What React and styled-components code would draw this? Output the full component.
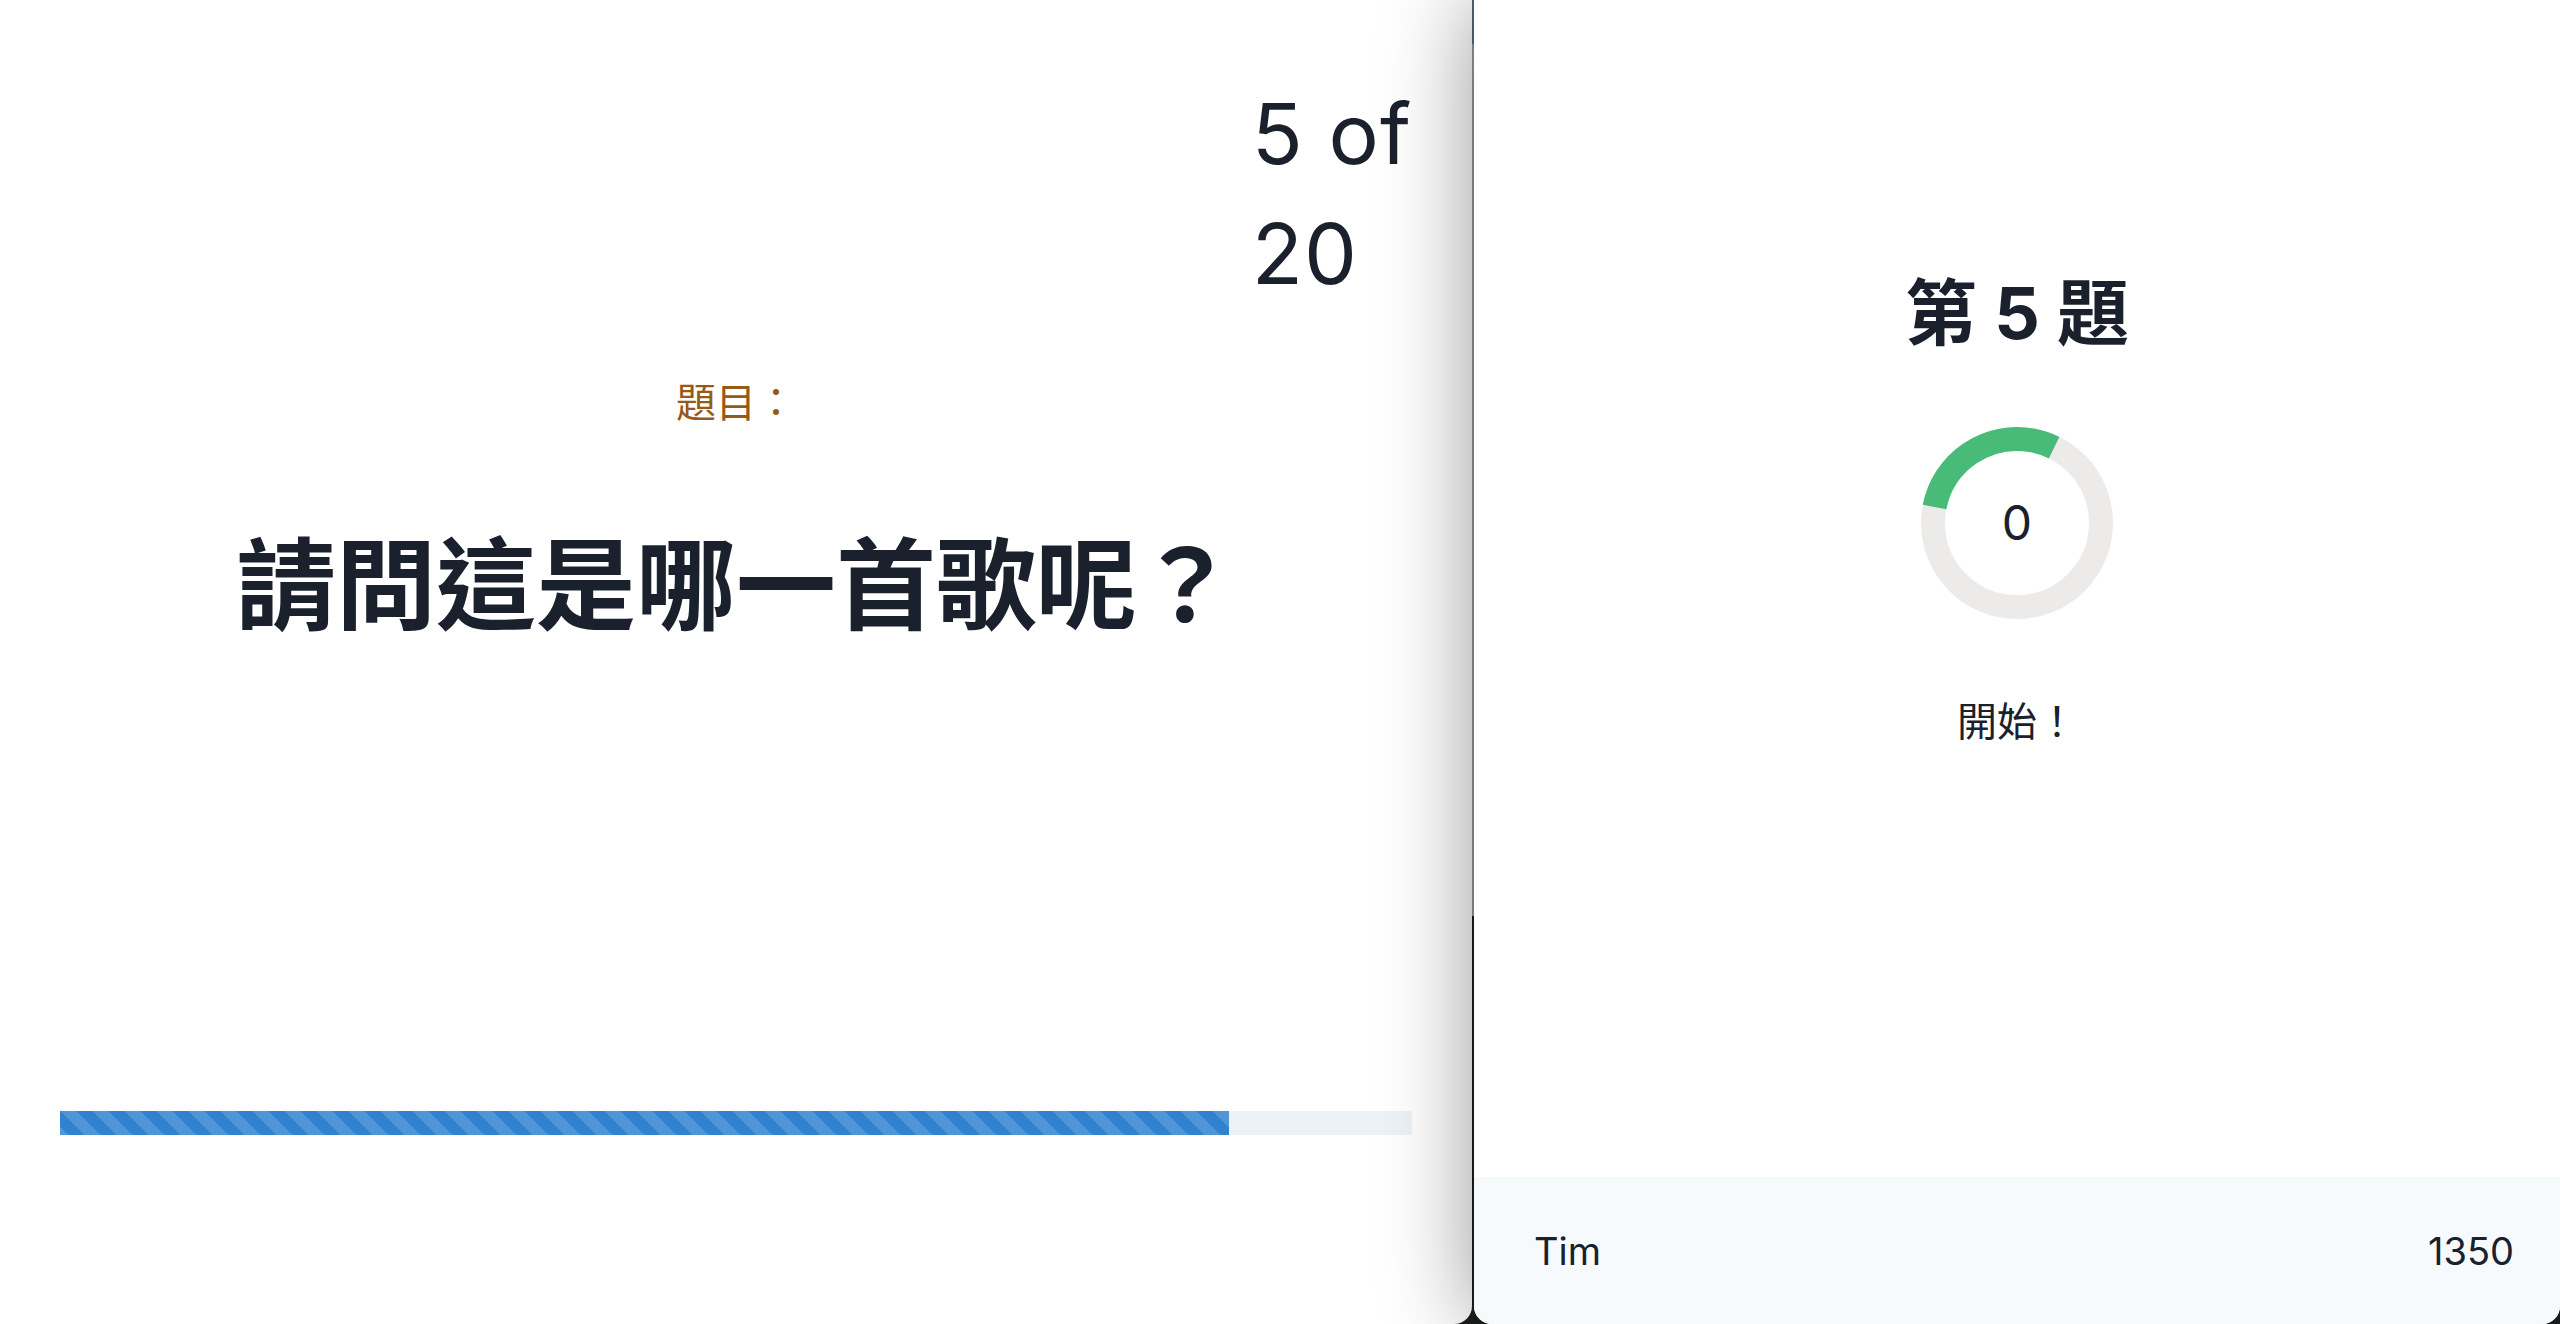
import React from 'react'
import styled, { createGlobalStyle } from 'styled-components'

const GlobalStyle = createGlobalStyle`
  *, *::before, *::after {
    box-sizing: border-box;
  }
  html, body {
    margin: 0;
    padding: 0;
    background: #ffffff;
  }
  body {
    font-family: Inter, "Noto Sans CJK TC", "Noto Sans", sans-serif;
    color: #1a202c;
  }
`

function Ring({ value, progress, rotate }) {
  const c = 2 * Math.PI * 42
  return (
    <RingBox>
      <svg viewBox="0 0 100 100" width="200" height="200">
        <circle cx="50" cy="50" r="42" fill="none" stroke="#edebe9" strokeWidth="12" />
        <circle
          cx="50"
          cy="50"
          r="42"
          fill="none"
          stroke="#48bb78"
          strokeWidth="12"
          strokeDasharray={`${c * progress} ${c}`}
          transform={`rotate(${rotate} 50 50)`}
        />
      </svg>
      <RingLabel>{value}</RingLabel>
    </RingBox>
  )
}

function App() {
  return (
    <>
      <GlobalStyle />
      <Desktop>
        <QuizWindow>
          <Counter>
            5 of
            <br />
            20
          </Counter>
          <Label>題目：</Label>
          <Question>請問這是哪一首歌呢？</Question>
          <Track>
            <Fill style={{ width: '86.5%' }} />
          </Track>
        </QuizWindow>
        <PlayerWindow>
          <Title>第 5 題</Title>
          <Ring value={0} progress={0.292} rotate={191} />
          <Status>開始！</Status>
          <Footer>
            <span>Tim</span>
            <span>1350</span>
          </Footer>
        </PlayerWindow>
      </Desktop>
    </>
  )
}

export default App

const Desktop = styled.div`
  width: 2560px;
  height: 1324px;
  display: flex;
  gap: 2px;
  overflow: hidden;
  background: linear-gradient(
    to bottom,
    #4b6b7e 0,
    #4b6b7e 44px,
    #9a9a9a 44px,
    #9a9a9a 916px,
    #1e1e1e 916px
  );
`

const QuizWindow = styled.div`
  width: 1472px;
  flex-shrink: 0;
  background: #ffffff;
  padding: 74px 60px 189px 60px;
  display: flex;
  flex-direction: column;
  border-bottom-right-radius: 18px;
`

const Counter = styled.div`
  align-self: flex-end;
  font-size: 84px;
  line-height: 120px;
  font-weight: 400;
  letter-spacing: 1px;
  color: #1a202c;
`

const Label = styled.div`
  margin-top: 59px;
  text-align: center;
  font-size: 40px;
  line-height: 60px;
  color: #975a16;
`

const Question = styled.h2`
  margin: 94px 0 0;
  text-align: center;
  font-size: 100px;
  line-height: 118px;
  font-weight: 700;
  color: #1a202c;
`

const Track = styled.div`
  margin-top: auto;
  height: 24px;
  background: #edf2f7;
  overflow: hidden;
`

const Fill = styled.div`
  height: 100%;
  background-color: #3182ce;
  background-image: linear-gradient(
    45deg,
    rgba(255, 255, 255, 0.15) 25%,
    transparent 25%,
    transparent 50%,
    rgba(255, 255, 255, 0.15) 50%,
    rgba(255, 255, 255, 0.15) 75%,
    transparent 75%,
    transparent
  );
  background-size: 32px 32px;
`

const PlayerWindow = styled.div`
  flex: 1;
  position: relative;
  z-index: 1;
  background: #ffffff;
  display: flex;
  flex-direction: column;
  align-items: center;
  padding-top: 270px;
  border-bottom-left-radius: 18px;
  border-bottom-right-radius: 18px;
  overflow: hidden;
  box-shadow: 0 0 90px rgba(0, 0, 0, 0.42);
`

const Title = styled.h2`
  margin: 0;
  font-size: 72px;
  line-height: 86px;
  font-weight: 700;
  color: #1a202c;
`

const RingBox = styled.div`
  position: relative;
  width: 200px;
  height: 200px;
  margin-top: 67px;

  svg {
    display: block;
  }
`

const RingLabel = styled.div`
  position: absolute;
  top: 50%;
  left: 50%;
  transform: translate(-50%, -50%);
  font-size: 48px;
  line-height: 1;
  color: #1a202c;
`

const Status = styled.p`
  margin: 69px 0 0;
  font-size: 40px;
  line-height: 60px;
  color: #1a202c;
`

const Footer = styled.div`
  margin-top: auto;
  align-self: stretch;
  height: 147px;
  background: #f7fafc;
  display: flex;
  align-items: center;
  justify-content: space-between;
  padding: 0 46px 0 60px;
  font-size: 38px;
  color: #1a202c;
`
